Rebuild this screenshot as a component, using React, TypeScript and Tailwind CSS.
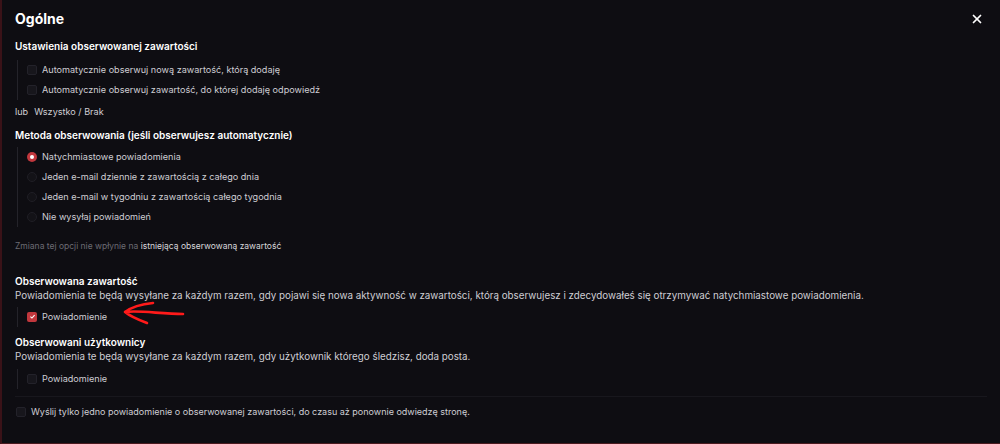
import { X } from 'lucide-react';

type Opt = { label: string; checked?: boolean };

const font = { fontFamily: 'Inter, "Noto Sans", sans-serif' };

function Checkbox({ checked }: { checked?: boolean }) {
  return (
    <span
      className={`w-[10px] h-[10px] rounded-[2px] flex items-center justify-center shrink-0 ${
        checked ? 'bg-[#c1373d]' : 'bg-[#17161c] border border-[#23222a]'
      }`}
    >
      {checked && (
        <svg viewBox="0 0 10 10" className="w-[7px] h-[7px]">
          <path d="M2 5.2 L4.2 7.2 L8 3" fill="none" stroke="white" strokeWidth="1.6" />
        </svg>
      )}
    </span>
  );
}

function Radio({ checked }: { checked?: boolean }) {
  return (
    <span
      className={`w-[10px] h-[10px] rounded-full flex items-center justify-center shrink-0 ${
        checked ? 'bg-[#c1373d]' : 'bg-[#131217] border border-[#1f1e25]'
      }`}
    >
      {checked && <span className="w-[4px] h-[4px] rounded-full bg-white" />}
    </span>
  );
}

function Group({ items, kind }: { items: Opt[]; kind: 'check' | 'radio' }) {
  return (
    <div className="ml-[2px] border-l border-[#24232a] pl-[9px] flex flex-col">
      {items.map((it) => (
        <div key={it.label} className="h-[20px] flex items-center gap-[5px]">
          {kind === 'check' ? <Checkbox checked={it.checked} /> : <Radio checked={it.checked} />}
          <span className="text-[9.1px] text-[#cfced4]">{it.label}</span>
        </div>
      ))}
    </div>
  );
}

export default function App() {
  return (
    <div
      style={font}
      className="w-[1000px] h-[444px] bg-[#0e0d12] border-l-2 border-l-[#3a1218] border-b border-b-[#4a1a1f] text-white overflow-hidden flex flex-col px-[13px]"
    >
      {/* Header */}
      <div className="flex items-center justify-between h-[36px] pt-[1px]">
        <h1 className="text-[14px] font-bold">Ogólne</h1>
        <X className="w-[14px] h-[14px] mr-[3px]" strokeWidth={3} />
      </div>

      <h2 className="text-[10px] font-semibold mt-[3px] leading-[14px]">Ustawienia obserwowanej zawartości</h2>
      <div className="mt-[7px]">
        <Group
          kind="check"
          items={[
            { label: 'Automatycznie obserwuj nową zawartość, którą dodaję' },
            { label: 'Automatycznie obserwuj zawartość, do której dodaję odpowiedź' },
          ]}
        />
      </div>
      <div className="text-[9.1px] text-[#cfced4] mt-[2px] h-[20px] flex items-center gap-[6px]">
        <span>lub</span>
        <span>Wszystko / Brak</span>
      </div>

      <h2 className="text-[10px] font-semibold mt-[6px] leading-[14px]">Metoda obserwowania (jeśli obserwujesz automatycznie)</h2>
      <div className="mt-[5px]">
        <Group
          kind="radio"
          items={[
            { label: 'Natychmiastowe powiadomienia', checked: true },
            { label: 'Jeden e-mail dziennie z zawartością z całego dnia' },
            { label: 'Jeden e-mail w tygodniu z zawartością całego tygodnia' },
            { label: 'Nie wysyłaj powiadomień' },
          ]}
        />
      </div>
      <p className="text-[8.5px] text-[#6c6b72] mt-[13px]">
        Zmiana tej opcji nie wpłynie na <span className="text-[#d8d7dc]">istniejącą obserwowaną zawartość</span>
      </p>

      <h2 className="text-[10px] font-semibold mt-[21px] leading-[14px]">Obserwowana zawartość</h2>
      <p className="text-[9.8px] text-[#cfced4] leading-[16px]">
        Powiadomienia te będą wysyłane za każdym razem, gdy pojawi się nowa aktywność w zawartości, którą obserwujesz i zdecydowałeś się otrzymywać natychmiastowe powiadomienia.
      </p>
      <div className="relative mt-[3px]">
        <Group kind="check" items={[{ label: 'Powiadomienie', checked: true }]} />
        <svg className="absolute left-[104px] top-[-8px] w-[72px] h-[26px]" viewBox="0 0 72 26">
          <path
            d="M6 13 C 14 7, 24 5, 34 4 M6 13 C 20 11, 42 15, 64 15 M6 13 C 12 18, 20 21, 28 24"
            fill="none"
            stroke="#ff1a1a"
            strokeWidth="2.6"
            strokeLinecap="round"
          />
        </svg>
      </div>

      <h2 className="text-[10px] font-semibold mt-[8px] leading-[14px]">Obserwowani użytkownicy</h2>
      <p className="text-[9.8px] text-[#cfced4] leading-[16px]">
        Powiadomienia te będą wysyłane za każdym razem, gdy użytkownik którego śledzisz, doda posta.
      </p>
      <div className="mt-[4px]">
        <Group kind="check" items={[{ label: 'Powiadomienie' }]} />
      </div>

      <div className="border-t border-[#18171d] mt-[7px] pt-[5px]">
        <div className="h-[20px] flex items-center gap-[5px] ml-[1px]">
          <Checkbox />
          <span className="text-[9px] text-[#cfced4]">
            Wyślij tylko jedno powiadomienie o obserwowanej zawartości, do czasu aż ponownie odwiedzę stronę.
          </span>
        </div>
      </div>
    </div>
  );
}
